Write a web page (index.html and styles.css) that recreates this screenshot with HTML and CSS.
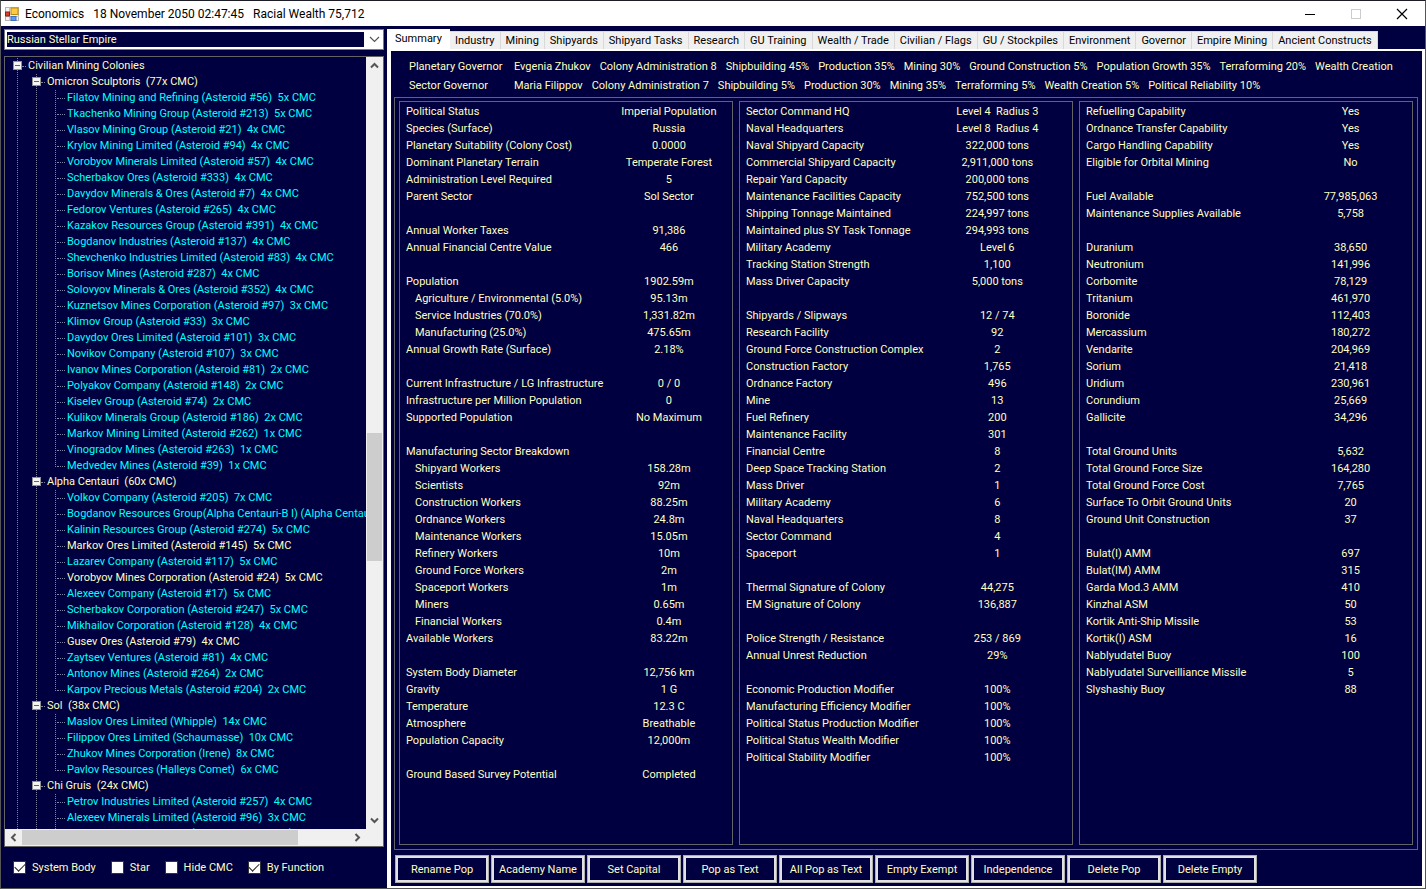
FILE: index.html
```
<!DOCTYPE html>
<html lang="en">
<head>
    <meta charset="UTF-8">
    <meta name="viewport" content="width=device-width, initial-scale=1.0">
    <title>Economics</title>
    <link rel="stylesheet" href="styles.css">
</head>
<body>
    <div class="window">
        <header class="title-bar">
            <svg class="app-icon" width="14" height="14" viewBox="0 0 14 14">
                <rect x="0.5" y="0.5" width="13" height="13" fill="#f4f4f4" stroke="#b4b4b4"/>
                <path d="M0 9.5h14M4.5 0v14M9.5 9v5" stroke="#c4c4c4"/>
                <rect x="0.5" y="5" width="4" height="4" fill="#d8402c" stroke="#8e1a10"/>
                <rect x="6" y="1" width="7" height="6.5" fill="#ffcb3c" stroke="#b98a12"/>
                <rect x="6" y="9.5" width="5" height="4" fill="#5d9bf0" stroke="#3a6fc4"/>
            </svg>
            <h1 class="title"><span>Economics</span><span>18 November 2050 02:47:45</span><span>Racial Wealth 75,712</span></h1>
            <div class="window-buttons">
                <button type="button" aria-label="Minimize"><svg width="12" height="12" viewBox="0 0 12 12"><path d="M1 6.5h10" stroke="#000"/></svg></button>
                <button type="button" aria-label="Maximize" disabled><svg width="12" height="12" viewBox="0 0 12 12"><rect x="1.5" y="1.5" width="9" height="9" fill="none" stroke="#ccc"/></svg></button>
                <button type="button" aria-label="Close"><svg width="12" height="12" viewBox="0 0 12 12"><path d="M1 1l10 10M11 1L1 11" stroke="#000" stroke-width="1.2"/></svg></button>
            </div>
        </header>

        <div class="body">
            <aside class="sidebar">
                <div class="combo">
                    <select aria-label="Empire">
                        <option>Russian Stellar Empire</option>
                    </select>
                    <svg class="chevron" width="11" height="7" viewBox="0 0 11 7"><path d="M1 1l4.5 4.5L10 1" fill="none" stroke="#555" stroke-width="1.2"/></svg>
                </div>

                <div class="tree-view">
                    <div class="tree-scroll">
                        <ul class="tree">
                            <li>
                                <div class="node"><button type="button" class="toggle" aria-label="Collapse"></button>Civilian Mining Colonies</div>
                                <ul class="tree systems">
                                    <li>
                                        <div class="node"><button type="button" class="toggle" aria-label="Collapse"></button>Omicron Sculptoris&nbsp; (77x CMC)</div>
                                        <ul class="tree leaves">
                                            <li>Filatov Mining and Refining (Asteroid #56)&nbsp; 5x CMC</li>
                                            <li>Tkachenko Mining Group (Asteroid #213)&nbsp; 5x CMC</li>
                                            <li>Vlasov Mining Group (Asteroid #21)&nbsp; 4x CMC</li>
                                            <li>Krylov Mining Limited (Asteroid #94)&nbsp; 4x CMC</li>
                                            <li>Vorobyov Minerals Limited (Asteroid #57)&nbsp; 4x CMC</li>
                                            <li>Scherbakov Ores (Asteroid #333)&nbsp; 4x CMC</li>
                                            <li>Davydov Minerals &amp; Ores (Asteroid #7)&nbsp; 4x CMC</li>
                                            <li>Fedorov Ventures (Asteroid #265)&nbsp; 4x CMC</li>
                                            <li>Kazakov Resources Group (Asteroid #391)&nbsp; 4x CMC</li>
                                            <li>Bogdanov Industries (Asteroid #137)&nbsp; 4x CMC</li>
                                            <li>Shevchenko Industries Limited (Asteroid #83)&nbsp; 4x CMC</li>
                                            <li>Borisov Mines (Asteroid #287)&nbsp; 4x CMC</li>
                                            <li>Solovyov Minerals &amp; Ores (Asteroid #352)&nbsp; 4x CMC</li>
                                            <li>Kuznetsov Mines Corporation (Asteroid #97)&nbsp; 3x CMC</li>
                                            <li>Klimov Group (Asteroid #33)&nbsp; 3x CMC</li>
                                            <li>Davydov Ores Limited (Asteroid #101)&nbsp; 3x CMC</li>
                                            <li>Novikov Company (Asteroid #107)&nbsp; 3x CMC</li>
                                            <li>Ivanov Mines Corporation (Asteroid #81)&nbsp; 2x CMC</li>
                                            <li>Polyakov Company (Asteroid #148)&nbsp; 2x CMC</li>
                                            <li>Kiselev Group (Asteroid #74)&nbsp; 2x CMC</li>
                                            <li>Kulikov Minerals Group (Asteroid #186)&nbsp; 2x CMC</li>
                                            <li>Markov Mining Limited (Asteroid #262)&nbsp; 1x CMC</li>
                                            <li>Vinogradov Mines (Asteroid #263)&nbsp; 1x CMC</li>
                                            <li>Medvedev Mines (Asteroid #39)&nbsp; 1x CMC</li>
                                        </ul>
                                    </li>
                                    <li>
                                        <div class="node"><button type="button" class="toggle" aria-label="Collapse"></button>Alpha Centauri&nbsp; (60x CMC)</div>
                                        <ul class="tree leaves">
                                            <li>Volkov Company (Asteroid #205)&nbsp; 7x CMC</li>
                                            <li>Bogdanov Resources Group(Alpha Centauri-B I) (Alpha Centauri-B I)&nbsp; 6x CMC</li>
                                            <li>Kalinin Resources Group (Asteroid #274)&nbsp; 5x CMC</li>
                                            <li class="plain">Markov Ores Limited (Asteroid #145)&nbsp; 5x CMC</li>
                                            <li>Lazarev Company (Asteroid #117)&nbsp; 5x CMC</li>
                                            <li class="plain">Vorobyov Mines Corporation (Asteroid #24)&nbsp; 5x CMC</li>
                                            <li>Alexeev Company (Asteroid #17)&nbsp; 5x CMC</li>
                                            <li>Scherbakov Corporation (Asteroid #247)&nbsp; 5x CMC</li>
                                            <li>Mikhailov Corporation (Asteroid #128)&nbsp; 4x CMC</li>
                                            <li class="plain">Gusev Ores (Asteroid #79)&nbsp; 4x CMC</li>
                                            <li>Zaytsev Ventures (Asteroid #81)&nbsp; 4x CMC</li>
                                            <li>Antonov Mines (Asteroid #264)&nbsp; 2x CMC</li>
                                            <li>Karpov Precious Metals (Asteroid #204)&nbsp; 2x CMC</li>
                                        </ul>
                                    </li>
                                    <li>
                                        <div class="node"><button type="button" class="toggle" aria-label="Collapse"></button>Sol&nbsp; (38x CMC)</div>
                                        <ul class="tree leaves">
                                            <li>Maslov Ores Limited (Whipple)&nbsp; 14x CMC</li>
                                            <li>Filippov Ores Limited (Schaumasse)&nbsp; 10x CMC</li>
                                            <li>Zhukov Mines Corporation (Irene)&nbsp; 8x CMC</li>
                                            <li>Pavlov Resources (Halleys Comet)&nbsp; 6x CMC</li>
                                        </ul>
                                    </li>
                                    <li>
                                        <div class="node"><button type="button" class="toggle" aria-label="Collapse"></button>Chi Gruis&nbsp; (24x CMC)</div>
                                        <ul class="tree leaves">
                                            <li>Petrov Industries Limited (Asteroid #257)&nbsp; 4x CMC</li>
                                            <li>Alexeev Minerals Limited (Asteroid #96)&nbsp; 3x CMC</li>
                                            <li>Sorokin Minerals Limited (Chi Gruis-A Moon 1)&nbsp; 3x CMC</li>
                                        </ul>
                                    </li>
                                </ul>
                            </li>
                        </ul>
                    </div>
                    <div class="scrollbar vertical">
                        <svg width="9" height="7" viewBox="0 0 9 7"><path d="M1 5.5L4.500 2 8 5.500" fill="none" stroke="#555" stroke-width="2"/></svg>
                        <div class="track"><div class="thumb"></div></div>
                        <svg width="9" height="7" viewBox="0 0 9 7"><path d="M1 1.500L4.500 5 8 1.500" fill="none" stroke="#555" stroke-width="2"/></svg>
                    </div>
                    <div class="scrollbar horizontal">
                        <svg width="7" height="9" viewBox="0 0 7 9"><path d="M5.500 1L2 4.500 5.500 8" fill="none" stroke="#555" stroke-width="2"/></svg>
                        <div class="track"><div class="thumb"></div></div>
                        <svg width="7" height="9" viewBox="0 0 7 9"><path d="M1.500 1L5 4.500 1.500 8" fill="none" stroke="#555" stroke-width="2"/></svg>
                    </div>
                </div>

                <div class="filters">
                    <label><input type="checkbox" checked>System Body</label>
                    <label><input type="checkbox">Star</label>
                    <label><input type="checkbox">Hide CMC</label>
                    <label><input type="checkbox" checked>By Function</label>
                </div>
            </aside>

            <main class="main">
                <div class="tabs" role="tablist">
                    <button type="button" class="tab active" role="tab" aria-selected="true">Summary</button>
                    <button type="button" class="tab" role="tab">Industry</button>
                    <button type="button" class="tab" role="tab">Mining</button>
                    <button type="button" class="tab" role="tab">Shipyards</button>
                    <button type="button" class="tab" role="tab">Shipyard Tasks</button>
                    <button type="button" class="tab" role="tab">Research</button>
                    <button type="button" class="tab" role="tab">GU Training</button>
                    <button type="button" class="tab" role="tab">Wealth / Trade</button>
                    <button type="button" class="tab" role="tab">Civilian / Flags</button>
                    <button type="button" class="tab" role="tab">GU / Stockpiles</button>
                    <button type="button" class="tab" role="tab">Environment</button>
                    <button type="button" class="tab" role="tab">Governor</button>
                    <button type="button" class="tab" role="tab">Empire Mining</button>
                    <button type="button" class="tab" role="tab">Ancient Constructs</button>
                </div>

                <section class="tab-page">
                    <div class="governors">
                        <div class="governor">
                            <span class="role">Planetary Governor</span>
                            <span>Evgenia Zhukov</span>
                            <span>Colony Administration 8</span>
                            <span>Shipbuilding 45%</span>
                            <span>Production 35%</span>
                            <span>Mining 30%</span>
                            <span>Ground Construction 5%</span>
                            <span>Population Growth 35%</span>
                            <span>Terraforming 20%</span>
                            <span>Wealth Creation</span>
                        </div>
                        <div class="governor">
                            <span class="role">Sector Governor</span>
                            <span>Maria Filippov</span>
                            <span>Colony Administration 7</span>
                            <span>Shipbuilding 5%</span>
                            <span>Production 30%</span>
                            <span>Mining 35%</span>
                            <span>Terraforming 5%</span>
                            <span>Wealth Creation 5%</span>
                            <span>Political Reliability 10%</span>
                        </div>
                    </div>

                    <div class="panels">
                        <div class="panel">
                            <table class="stats population">
                                <tbody>
                                    <tr><th>Political Status</th><td>Imperial Population</td></tr>
                                    <tr><th>Species (Surface)</th><td>Russia</td></tr>
                                    <tr><th>Planetary Suitability (Colony Cost)</th><td>0.0000</td></tr>
                                    <tr><th>Dominant Planetary Terrain</th><td>Temperate Forest</td></tr>
                                    <tr><th>Administration Level Required</th><td>5</td></tr>
                                    <tr><th>Parent Sector</th><td>Sol Sector</td></tr>
                                </tbody>
                                <tbody>
                                    <tr><th>Annual Worker Taxes</th><td>91,386</td></tr>
                                    <tr><th>Annual Financial Centre Value</th><td>466</td></tr>
                                </tbody>
                                <tbody>
                                    <tr><th>Population</th><td>1902.59m</td></tr>
                                    <tr class="sub"><th>Agriculture / Environmental (5.0%)</th><td>95.13m</td></tr>
                                    <tr class="sub"><th>Service Industries (70.0%)</th><td>1,331.82m</td></tr>
                                    <tr class="sub"><th>Manufacturing (25.0%)</th><td>475.65m</td></tr>
                                    <tr><th>Annual Growth Rate (Surface)</th><td>2.18%</td></tr>
                                </tbody>
                                <tbody>
                                    <tr><th>Current Infrastructure / LG Infrastructure</th><td>0 / 0</td></tr>
                                    <tr><th>Infrastructure per Million Population</th><td>0</td></tr>
                                    <tr><th>Supported Population</th><td>No Maximum</td></tr>
                                </tbody>
                                <tbody>
                                    <tr><th>Manufacturing Sector Breakdown</th><td></td></tr>
                                    <tr class="sub"><th>Shipyard Workers</th><td>158.28m</td></tr>
                                    <tr class="sub"><th>Scientists</th><td>92m</td></tr>
                                    <tr class="sub"><th>Construction Workers</th><td>88.25m</td></tr>
                                    <tr class="sub"><th>Ordnance Workers</th><td>24.8m</td></tr>
                                    <tr class="sub"><th>Maintenance Workers</th><td>15.05m</td></tr>
                                    <tr class="sub"><th>Refinery Workers</th><td>10m</td></tr>
                                    <tr class="sub"><th>Ground Force Workers</th><td>2m</td></tr>
                                    <tr class="sub"><th>Spaceport Workers</th><td>1m</td></tr>
                                    <tr class="sub"><th>Miners</th><td>0.65m</td></tr>
                                    <tr class="sub"><th>Financial Workers</th><td>0.4m</td></tr>
                                    <tr><th>Available Workers</th><td>83.22m</td></tr>
                                </tbody>
                                <tbody>
                                    <tr><th>System Body Diameter</th><td>12,756 km</td></tr>
                                    <tr><th>Gravity</th><td>1 G</td></tr>
                                    <tr><th>Temperature</th><td>12.3 C</td></tr>
                                    <tr><th>Atmosphere</th><td>Breathable</td></tr>
                                    <tr><th>Population Capacity</th><td>12,000m</td></tr>
                                </tbody>
                                <tbody>
                                    <tr><th>Ground Based Survey Potential</th><td>Completed</td></tr>
                                </tbody>
                            </table>
                        </div>

                        <div class="panel">
                            <table class="stats facilities">
                                <tbody>
                                    <tr><th>Sector Command HQ</th><td>Level 4&nbsp; Radius 3</td></tr>
                                    <tr><th>Naval Headquarters</th><td>Level 8&nbsp; Radius 4</td></tr>
                                    <tr><th>Naval Shipyard Capacity</th><td>322,000 tons</td></tr>
                                    <tr><th>Commercial Shipyard Capacity</th><td>2,911,000 tons</td></tr>
                                    <tr><th>Repair Yard Capacity</th><td>200,000 tons</td></tr>
                                    <tr><th>Maintenance Facilities Capacity</th><td>752,500 tons</td></tr>
                                    <tr><th>Shipping Tonnage Maintained</th><td>224,997 tons</td></tr>
                                    <tr><th>Maintained plus SY Task Tonnage</th><td>294,993 tons</td></tr>
                                    <tr><th>Military Academy</th><td>Level 6</td></tr>
                                    <tr><th>Tracking Station Strength</th><td>1,100</td></tr>
                                    <tr><th>Mass Driver Capacity</th><td>5,000 tons</td></tr>
                                </tbody>
                                <tbody>
                                    <tr><th>Shipyards / Slipways</th><td>12 / 74</td></tr>
                                    <tr><th>Research Facility</th><td>92</td></tr>
                                    <tr><th>Ground Force Construction Complex</th><td>2</td></tr>
                                    <tr><th>Construction Factory</th><td>1,765</td></tr>
                                    <tr><th>Ordnance Factory</th><td>496</td></tr>
                                    <tr><th>Mine</th><td>13</td></tr>
                                    <tr><th>Fuel Refinery</th><td>200</td></tr>
                                    <tr><th>Maintenance Facility</th><td>301</td></tr>
                                    <tr><th>Financial Centre</th><td>8</td></tr>
                                    <tr><th>Deep Space Tracking Station</th><td>2</td></tr>
                                    <tr><th>Mass Driver</th><td>1</td></tr>
                                    <tr><th>Military Academy</th><td>6</td></tr>
                                    <tr><th>Naval Headquarters</th><td>8</td></tr>
                                    <tr><th>Sector Command</th><td>4</td></tr>
                                    <tr><th>Spaceport</th><td>1</td></tr>
                                </tbody>
                                <tbody>
                                    <tr><th>Thermal Signature of Colony</th><td>44,275</td></tr>
                                    <tr><th>EM Signature of Colony</th><td>136,887</td></tr>
                                </tbody>
                                <tbody>
                                    <tr><th>Police Strength / Resistance</th><td>253 / 869</td></tr>
                                    <tr><th>Annual Unrest Reduction</th><td>29%</td></tr>
                                </tbody>
                                <tbody>
                                    <tr><th>Economic Production Modifier</th><td>100%</td></tr>
                                    <tr><th>Manufacturing Efficiency Modifier</th><td>100%</td></tr>
                                    <tr><th>Political Status Production Modifier</th><td>100%</td></tr>
                                    <tr><th>Political Status Wealth Modifier</th><td>100%</td></tr>
                                    <tr><th>Political Stability Modifier</th><td>100%</td></tr>
                                </tbody>
                            </table>
                        </div>

                        <div class="panel">
                            <table class="stats stockpile">
                                <tbody>
                                    <tr><th>Refuelling Capability</th><td>Yes</td></tr>
                                    <tr><th>Ordnance Transfer Capability</th><td>Yes</td></tr>
                                    <tr><th>Cargo Handling Capability</th><td>Yes</td></tr>
                                    <tr><th>Eligible for Orbital Mining</th><td>No</td></tr>
                                </tbody>
                                <tbody>
                                    <tr><th>Fuel Available</th><td>77,985,063</td></tr>
                                    <tr><th>Maintenance Supplies Available</th><td>5,758</td></tr>
                                </tbody>
                                <tbody>
                                    <tr><th>Duranium</th><td>38,650</td></tr>
                                    <tr><th>Neutronium</th><td>141,996</td></tr>
                                    <tr><th>Corbomite</th><td>78,129</td></tr>
                                    <tr><th>Tritanium</th><td>461,970</td></tr>
                                    <tr><th>Boronide</th><td>112,403</td></tr>
                                    <tr><th>Mercassium</th><td>180,272</td></tr>
                                    <tr><th>Vendarite</th><td>204,969</td></tr>
                                    <tr><th>Sorium</th><td>21,418</td></tr>
                                    <tr><th>Uridium</th><td>230,961</td></tr>
                                    <tr><th>Corundium</th><td>25,669</td></tr>
                                    <tr><th>Gallicite</th><td>34,296</td></tr>
                                </tbody>
                                <tbody>
                                    <tr><th>Total Ground Units</th><td>5,632</td></tr>
                                    <tr><th>Total Ground Force Size</th><td>164,280</td></tr>
                                    <tr><th>Total Ground Force Cost</th><td>7,765</td></tr>
                                    <tr><th>Surface To Orbit Ground Units</th><td>20</td></tr>
                                    <tr><th>Ground Unit Construction</th><td>37</td></tr>
                                </tbody>
                                <tbody>
                                    <tr><th>Bulat(I) AMM</th><td>697</td></tr>
                                    <tr><th>Bulat(IM) AMM</th><td>315</td></tr>
                                    <tr><th>Garda Mod.3 AMM</th><td>410</td></tr>
                                    <tr><th>Kinzhal ASM</th><td>50</td></tr>
                                    <tr><th>Kortik Anti-Ship Missile</th><td>53</td></tr>
                                    <tr><th>Kortik(I) ASM</th><td>16</td></tr>
                                    <tr><th>Nablyudatel Buoy</th><td>100</td></tr>
                                    <tr><th>Nablyudatel Surveilliance Missile</th><td>5</td></tr>
                                    <tr><th>Slyshashiy Buoy</th><td>88</td></tr>
                                </tbody>
                            </table>
                        </div>
                    </div>

                    <div class="actions">
                        <button type="button" class="btn">Rename Pop</button>
                        <button type="button" class="btn">Academy Name</button>
                        <button type="button" class="btn">Set Capital</button>
                        <button type="button" class="btn">Pop as Text</button>
                        <button type="button" class="btn">All Pop as Text</button>
                        <button type="button" class="btn">Empty Exempt</button>
                        <button type="button" class="btn">Independence</button>
                        <button type="button" class="btn">Delete Pop</button>
                        <button type="button" class="btn">Delete Empty</button>
                    </div>
                </section>
            </main>
        </div>
    </div>
</body>
</html>
```
FILE: styles.css
```
* {
    box-sizing: border-box;
}
body {
    margin: 0;
    font-family: Roboto, "Liberation Sans", sans-serif;
    font-size: 11px;
    color: #ffffc0;
    background: #000040;
}
button, select, input {
    font: inherit;
    color: inherit;
    margin: 0;
}
ul {
    list-style: none;
    margin: 0;
    padding: 0;
}
.window {
    display: flex;
    flex-direction: column;
    height: 100vh;
    min-height: 800px;
    border: 1px solid #555;
    border-top-color: #1c1c26;
}

/* title bar */
.title-bar {
    display: flex;
    align-items: center;
    height: 25px;
    padding-left: 4px;
    background: white;
    color: black;
}
.title {
    display: flex;
    flex: 1;
    gap: 9px;
    margin: 0 0 0 6px;
    font-size: 12px;
    font-weight: normal;
}
.window-buttons {
    display: flex;
}
.window-buttons button {
    display: flex;
    align-items: center;
    justify-content: center;
    width: 46px;
    height: 25px;
    padding: 0;
    border: none;
    background: none;
}

.body {
    display: flex;
    flex: 1;
    min-height: 0;
}

/* left side */
.sidebar {
    display: flex;
    flex-direction: column;
    width: 383px;
    padding: 3px 0 0 3px;
}
.combo {
    display: flex;
    align-items: center;
    height: 21px;
    padding: 2px;
    border: 1px solid #7a7a7a;
    background: white;
}
.combo select {
    flex: 1;
    height: 15px;
    padding: 0;
    border: none;
    border-radius: 0;
    appearance: none;
    background: #000040;
    line-height: 15px;
}
.chevron {
    margin: 0 1px 0 5px;
}
.tree-view {
    display: grid;
    grid-template-columns: 1fr 17px;
    grid-template-rows: 1fr 17px;
    flex: 1;
    min-height: 0;
    margin-top: 6px;
    border: 1px solid #646464;
}
.tree-scroll {
    overflow: hidden;
    padding-top: 1px;
}
.tree {
    background: repeating-linear-gradient(#8080a0 0 1px, transparent 1px 2px) 12px 0 / 1px 100% no-repeat;
    line-height: 16px;
    white-space: nowrap;
}
.tree .tree {
    margin-left: 19px;
}
.tree .leaves {
    background-size: 1px calc(100% - 7px);
}
.node {
    display: flex;
    align-items: center;
    height: 16px;
    padding-left: 8px;
}
.node::before {
    content: "";
    order: -1;
    width: 4px;
    margin-right: 2px;
    border-top: 1px dotted #8080a0;
}
.toggle {
    order: -2;
    width: 9px;
    height: 9px;
    margin-bottom: 1px;
    padding: 0;
    border: 1px solid #919191;
    background: linear-gradient(#4b63a7, #4b63a7) center / 5px 1px no-repeat, #f4f4f4;
}
.leaves li {
    display: flex;
    align-items: center;
    height: 16px;
    padding-left: 14px;
    color: cyan;
}
.leaves li::before {
    content: "";
    flex: none;
    width: 8px;
    margin-right: 2px;
    border-top: 1px dotted #8080a0;
}
.leaves .plain {
    color: #ffffc0;
}
.scrollbar {
    display: flex;
    align-items: center;
    background: #f0f0f0;
}
.vertical {
    flex-direction: column;
    padding: 5px 0;
}
.horizontal {
    grid-column: 1 / 3;
    padding: 0 22px 0 5px;
}
.track {
    flex: 1;
    display: flex;
}
.vertical .track {
    width: 15px;
    flex-direction: column;
    padding-top: 364px;
}
.vertical .thumb {
    height: 128px;
}
.horizontal .track {
    height: 15px;
    padding-left: 5px;
}
.horizontal .thumb {
    width: 276px;
}
.thumb {
    background: #cdcdcd;
}
.filters {
    display: flex;
    align-items: center;
    gap: 15px;
    height: 41px;
    padding-left: 9px;
}
.filters label {
    display: flex;
    align-items: center;
    gap: 6px;
}
.filters input {
    display: flex;
    align-items: center;
    justify-content: center;
    width: 13px;
    height: 13px;
    border: 1px solid #333;
    appearance: none;
    background: white;
}
.filters input:checked::before {
    content: "";
    width: 9px;
    height: 5px;
    margin-top: -3px;
    border: solid #222;
    border-width: 0 0 1px 1px;
    transform: rotate(-45deg);
}

/* tabs */
.main {
    display: flex;
    flex-direction: column;
    flex: 1;
    min-width: 0;
    padding: 3px 0 0 3px;
}
.tabs {
    display: flex;
    align-items: flex-end;
    height: 20px;
}
.tab {
    height: 18px;
    padding: 0 5px;
    border: 1px solid #d9d9d9;
    border-left: none;
    border-bottom: none;
    background: #f0f0f0;
    color: black;
    line-height: 16px;
    white-space: nowrap;
}
.tab.active {
    height: 20px;
    padding: 0 7px 2px 8px;
    border-color: white;
    background: white;
}
.tab-page {
    display: flex;
    flex-direction: column;
    flex: 1;
    min-height: 0;
    border: solid white;
    border-width: 2px 3px 2px 4px;
}
.governors {
    padding: 6px 0 2px 18px;
    line-height: 19px;
}
.governor {
    display: flex;
    gap: 9px;
    white-space: nowrap;
}
.role {
    width: 96px;
}
.panels {
    display: grid;
    grid-template-columns: repeat(3, 1fr);
    gap: 6px;
    flex: 1;
    min-height: 0;
    margin: 0 4px 0 3px;
    padding: 3px 4px 4px;
    border: 1px solid #646464;
}
.panel {
    border: 1px solid #646464;
}
.stats {
    width: 100%;
    border-collapse: collapse;
    table-layout: fixed;
    margin-top: 1px;
    line-height: 17px;
    white-space: nowrap;
}
.stats th {
    padding: 0 0 0 6px;
    font-weight: normal;
    text-align: left;
}
.stats td {
    padding: 0;
    text-align: center;
}
.stats tbody + tbody tr:first-child > * {
    padding-top: 17px;
}
.stats .sub th {
    padding-left: 15px;
}
.population td {
    width: 38%;
}
.facilities td {
    width: 45%;
}
.stockpile td {
    width: 37%;
}

/* bottom buttons */
.actions {
    display: flex;
    gap: 2px;
    padding: 5px 4px 3px;
}
.btn {
    width: 94px;
    height: 28px;
    padding: 0;
    border: 3px solid #e1e1e1;
    outline: 1px solid #adadad;
    outline-offset: -1px;
    background: #000040;
    white-space: nowrap;
}
```
